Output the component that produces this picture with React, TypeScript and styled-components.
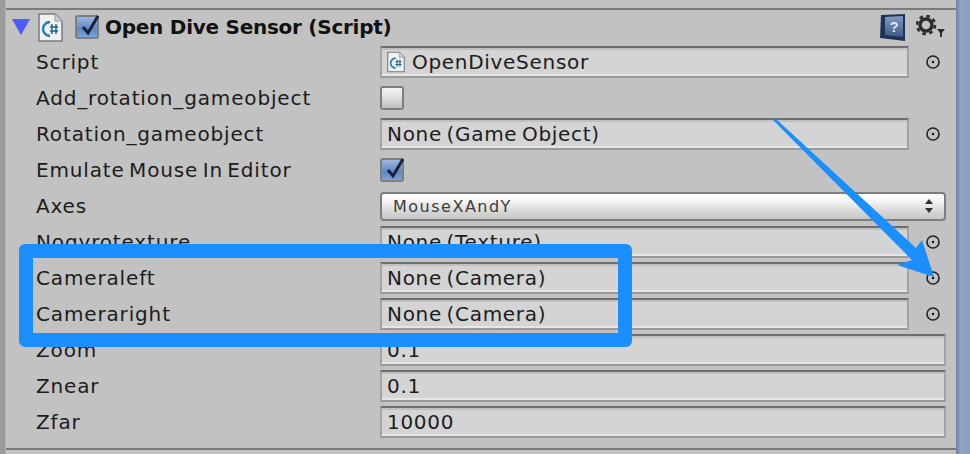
import styled, { createGlobalStyle } from "styled-components";

const GlobalStyle = createGlobalStyle`
  html, body {
    margin: 0;
    padding: 0;
    background: #c2c2c2;
  }
`;

const Page = styled.div`
  position: relative;
  width: 970px;
  height: 454px;
  display: flex;
  overflow: hidden;
  font-family: "DejaVu Sans", Verdana, sans-serif;
  color: #1c1c1c;
`;

const LeftStrip = styled.div`
  width: 6px;
  background: #9c9c9c;
  border-right: 1px solid #b0b0b0;
  box-sizing: border-box;
`;

const RightStrip = styled.div`
  width: 14px;
  background: linear-gradient(to right, #6c80a8, #93a5c6 35%, #8c9ec0);
`;

const Panel = styled.div`
  flex: 1;
  padding-top: 8px;
  display: flex;
  flex-direction: column;
`;

const TopRule = styled.div`
  height: 2px;
  background: #7b7b7b;
`;

const Header = styled.div`
  height: 34px;
  display: flex;
  align-items: center;
  padding: 0 10px 0 6px;
`;

const Title = styled.span`
  margin-left: 6px;
  font-size: 20px;
  font-weight: bold;
  letter-spacing: -0.26px;
  flex: 1;
  color: #111;
`;

const Rows = styled.div`
  display: flex;
  flex-direction: column;
  padding: 0 10px 0 30px;
`;

const Row = styled.div`
  height: 36px;
  display: flex;
  align-items: center;
`;

const Label = styled.div`
  width: 344px;
  font-size: 20px;
  letter-spacing: 0.85px;
  word-spacing: -2.8px;
  white-space: nowrap;
`;

const Field = styled.div<{ $short?: boolean }>`
  box-sizing: border-box;
  width: ${(p) => (p.$short ? "529px" : "566px")};
  height: 32px;
  padding: 0 5px;
  display: flex;
  align-items: center;
  font-size: 20px;
  letter-spacing: 0.7px;
  word-spacing: -2.5px;
  white-space: nowrap;
  background: #d4d4d4;
  border-top: 2px solid #6d6d6d;
  border-left: 2px solid #a4a4a4;
  border-right: 2px solid #a4a4a4;
  border-bottom: 2px solid #9a9a9a;
  box-shadow: inset 0 -2px 0 #e6e6e6, inset 0 2px 0 #c0c0c0;
`;

const Target = styled.svg`
  width: 16px;
  height: 16px;
  margin-left: 16px;
`;

const Popup = styled.div`
  box-sizing: border-box;
  width: 566px;
  height: 29px;
  padding: 0 10px 0 11px;
  display: flex;
  align-items: center;
  justify-content: space-between;
  font-size: 16px;
  letter-spacing: 1.5px;
  color: #3c3c3c;
  border: 2px solid #7d7d7d;
  border-radius: 4px;
  background: linear-gradient(to bottom, #ffffff 0%, #f4f4f4 30%, #d0d0d0 80%, #c8c8c8 100%);
`;

const Check = styled.div<{ $on?: boolean }>`
  box-sizing: border-box;
  width: 24px;
  height: 24px;
  border: 2px solid #7f7f7f;
  border-radius: 3px;
  background: ${(p) =>
    p.$on
      ? "linear-gradient(to bottom, #9db8e0, #5f86c4 60%, #7fa2d8)"
      : "linear-gradient(to bottom, #f4f4f4, #d8d8d8 60%, #bdbdbd)"};
  position: relative;
`;

const CheckMark = styled.svg`
  position: absolute;
  left: 1px;
  top: -5px;
  width: 24px;
  height: 26px;
`;

const BottomRule = styled.div`
  margin-top: 8px;
  height: 2px;
  background: #7b7b7b;
`;

const Highlight = styled.div`
  position: absolute;
  left: 19px;
  top: 244px;
  width: 613px;
  height: 103px;
  box-sizing: border-box;
  border: 14px solid #1b8fff;
  border-radius: 6px;
`;

const Arrow = styled.svg`
  position: absolute;
  left: 0;
  top: 0;
  width: 970px;
  height: 454px;
  pointer-events: none;
`;

const FileIcon = ({ size }: { size: number }) => (
  <svg width={size} height={size + 4} viewBox="0 0 25 29" style={{ flexShrink: 0 }}>
    <path d="M1 1h16l7 7v20H1z" fill="#f1f1f1" stroke="#7a7a7a" strokeWidth="1.5" />
    <path d="M17 1v7h7" fill="#cfcfcf" stroke="#9a9a9a" />
    <path d="M12 9a7 7 0 0 0 0 14" fill="none" stroke="#1a7fb5" strokeWidth="2.4" />
    <path d="M14 11v10M18 11v10M12 14h8M12 18h8" stroke="#1d5f8a" strokeWidth="1.4" />
  </svg>
);

const TargetIcon = () => (
  <Target viewBox="0 0 16 16">
    <circle cx="8" cy="8" r="6" fill="none" stroke="#222" strokeWidth="1.6" />
    <circle cx="8" cy="8" r="1.2" fill="#111" />
  </Target>
);

const CheckBox = ({ on }: { on?: boolean }) => (
  <Check $on={on}>
    {on && (
      <CheckMark viewBox="0 0 24 26">
        <path d="M5 15l5 6L20 4" fill="none" stroke="#17233a" strokeWidth="3" />
      </CheckMark>
    )}
  </Check>
);

const HelpIcon = () => (
  <svg width="27" height="28" viewBox="0 0 27 28">
    <defs>
      <linearGradient id="helpCover" x1="0" y1="0" x2="0" y2="1">
        <stop offset="0" stopColor="#7f9cc4" />
        <stop offset="1" stopColor="#3d5a88" />
      </linearGradient>
    </defs>
    <path d="M2 2l24-1v27L1 25z" fill="#1f3358" />
    <path d="M6 4l18-1v21L6 22z" fill="url(#helpCover)" />
    <text x="15" y="19" fontSize="15" fontWeight="bold" textAnchor="middle" fill="#dfe6f2" fontFamily="Liberation Sans, sans-serif">
      ?
    </text>
  </svg>
);

const GearIcon = () => (
  <svg width="30" height="24" viewBox="0 0 30 24" style={{ marginLeft: 10 }}>
    <circle cx="10" cy="10" r="6" fill="none" stroke="#2c2c2c" strokeWidth="3.4" />
    <circle cx="10" cy="10" r="9" fill="none" stroke="#2c2c2c" strokeWidth="2.6" strokeDasharray="3.6 3.47" />
    <path d="M21 14h8l-4 5z" fill="#2c2c2c" />
    <path d="M24 17h2v5h-2z" fill="#2c2c2c" />
  </svg>
);

const App = () => {
  return (
    <>
      <GlobalStyle />
      <Page>
        <LeftStrip />
        <Panel>
          <TopRule />
          <Header>
            <svg width="18" height="16" viewBox="0 0 18 16" style={{ marginRight: 8 }}>
              <path d="M0 0h18l-9 16z" fill="#4a5cff" />
            </svg>
            <FileIcon size={25} />
            <span style={{ width: 12 }} />
            <CheckBox on />
            <Title>Open Dive Sensor (Script)</Title>
            <HelpIcon />
            <GearIcon />
          </Header>
          <Rows>
            <Row>
              <Label>Script</Label>
              <Field $short>
                <FileIcon size={18} />
                <span style={{ marginLeft: 7 }}>OpenDiveSensor</span>
              </Field>
              <TargetIcon />
            </Row>
            <Row>
              <Label>Add_rotation_gameobject</Label>
              <CheckBox />
            </Row>
            <Row>
              <Label>Rotation_gameobject</Label>
              <Field $short>None (Game Object)</Field>
              <TargetIcon />
            </Row>
            <Row>
              <Label>Emulate Mouse In Editor</Label>
              <CheckBox on />
            </Row>
            <Row>
              <Label>Axes</Label>
              <Popup>
                MouseXAndY
                <svg width="10" height="16" viewBox="0 0 10 16">
                  <path d="M5 1l4 5H1zM5 15l4-5H1z" fill="#333" />
                </svg>
              </Popup>
            </Row>
            <Row>
              <Label>Nogyrotexture</Label>
              <Field $short>None (Texture)</Field>
              <TargetIcon />
            </Row>
            <Row>
              <Label>Cameraleft</Label>
              <Field $short>None (Camera)</Field>
              <TargetIcon />
            </Row>
            <Row>
              <Label>Cameraright</Label>
              <Field $short>None (Camera)</Field>
              <TargetIcon />
            </Row>
            <Row>
              <Label>Zoom</Label>
              <Field>0.1</Field>
            </Row>
            <Row>
              <Label>Znear</Label>
              <Field>0.1</Field>
            </Row>
            <Row>
              <Label>Zfar</Label>
              <Field>10000</Field>
            </Row>
          </Rows>
          <BottomRule />
        </Panel>
        <RightStrip />
        <Highlight />
        <Arrow viewBox="0 0 970 454">
          <path d="M773 120l3-1L916 248l6-8 12 37-37-12 15-5z" fill="#1b8fff" />
        </Arrow>
      </Page>
    </>
  );
};

export default App;
